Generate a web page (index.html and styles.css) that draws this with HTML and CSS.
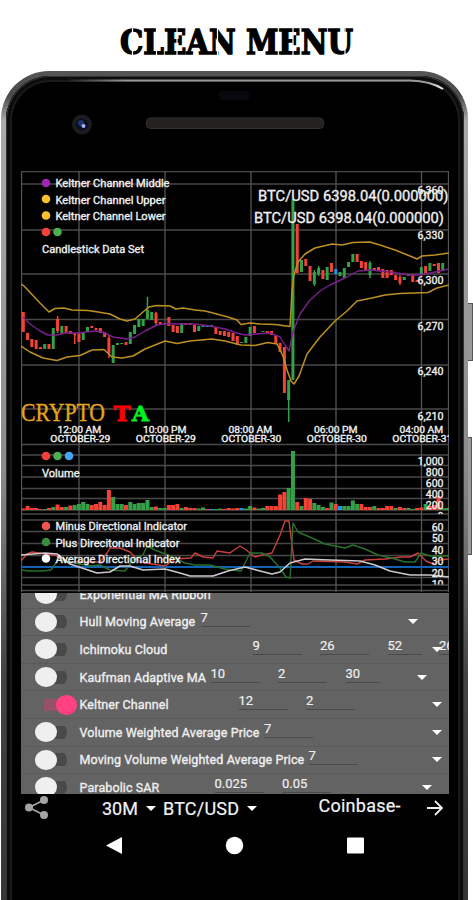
FILE: index.html
```html
<!DOCTYPE html>
<html lang="en">
<head>
  <meta charset="UTF-8">
  <meta name="viewport" content="width=device-width, initial-scale=1.0">
  <title>Crypto TA - Clean Menu</title>
  <link rel="stylesheet" href="styles.css">
</head>
<body>
  <h1>
    <svg width="473" height="71" viewBox="0 0 473 71">
      <text class="title" x="120" y="54" textLength="233" lengthAdjust="spacingAndGlyphs">CLEAN MENU</text>
      <!-- stencil cuts -->
      <path class="cuts" d="M132.500 28v28M156.500 28v28M177 28v28M217.500 28v28M293 28v28M345 28v28"/>
    </svg>
  </h1>

  <div class="device">
    <div class="side-button power"></div>
    <div class="side-button volume"></div>
    <div class="phone">
      <div class="top-bezel">
        <svg width="466" height="100" viewBox="2 71 466 100">
          <defs>
            <linearGradient id="shine" x1="0" x2="1">
              <stop offset="0" stop-color="#222"/>
              <stop offset="0.15" stop-color="#999"/>
              <stop offset="0.95" stop-color="#999"/>
              <stop offset="1" stop-color="#eee"/>
            </linearGradient>
          </defs>
          <path d="M70 80.500H410Q430 81 443 89" fill="none" stroke="url(#shine)" stroke-width="1.800"/>
          <rect x="219" y="91" width="30" height="9" rx="3" fill="#08090f"/>
          <circle cx="82" cy="124.500" r="10" fill="#1c1c1f"/>
          <circle cx="82" cy="124.500" r="6" fill="#0a0d20"/>
          <circle cx="81" cy="123" r="3" fill="#26336d"/>
          <circle cx="83.500" cy="126" r="2" fill="#a5b4ff"/>
          <rect x="146.500" y="118" width="177" height="10.500" rx="4" fill="#23201f" stroke="#35312f"/>
        </svg>
      </div>

      <div class="screen">
        <svg id="chart" width="428" height="422" viewBox="21 171 428 422"></svg>

        <div class="menu">
          <div class="row">
            <span class="switch"></span><span class="name">Exponential MA Ribbon</span>
          </div>
          <div class="row hull">
            <span class="switch"></span><span class="name">Hull Moving Average</span>
            <span class="field">7</span>
            <span class="caret"></span>
          </div>
          <div class="row ichimoku">
            <span class="switch"></span><span class="name">Ichimoku Cloud</span>
            <span class="field">9</span><span class="field">26</span><span class="field short">52</span>
            <span class="caret"></span><span class="field last">26</span>
          </div>
          <div class="row kaufman">
            <span class="switch"></span><span class="name">Kaufman Adaptive MA</span>
            <span class="field">10</span><span class="field">2</span><span class="field short">30</span>
            <span class="caret"></span>
          </div>
          <div class="row keltner">
            <span class="switch on"></span><span class="name">Keltner Channel</span>
            <span class="field">12</span><span class="field">2</span>
            <span class="caret"></span>
          </div>
          <div class="row vwap">
            <span class="switch"></span><span class="name">Volume Weighted Average Price</span>
            <span class="field">7</span>
            <span class="caret"></span>
          </div>
          <div class="row mvwap">
            <span class="switch"></span><span class="name">Moving Volume Weighted Average Price</span>
            <span class="field">7</span>
            <span class="caret"></span>
          </div>
          <div class="row sar">
            <span class="switch"></span><span class="name">Parabolic SAR</span>
            <span class="field">0.025</span><span class="field">0.05</span>
            <span class="caret"></span>
          </div>
        </div>

        <div class="toolbar">
          <svg class="share" width="24" height="23" viewBox="0 0 24 23">
            <path d="M19 4L4 11.500L19 19" fill="none" stroke="#a3a3a3" stroke-width="1.800"/>
            <circle cx="19" cy="4" r="4"/><circle cx="4" cy="11.500" r="4"/><circle cx="19" cy="19" r="4"/>
          </svg>
          <span class="interval">30M</span><span class="caret"></span>
          <span class="pair">BTC/USD</span><span class="caret"></span>
          <span class="exchange">Coinbase-</span>
          <svg class="next" width="18" height="18" viewBox="0 0 18 18">
            <path d="M1 9H16M9 2L16 9L9 16" fill="none" stroke="#eee" stroke-width="1.800"/>
          </svg>
        </div>

        <div class="navbar">
          <svg width="428" height="20" viewBox="21 835 428 20" fill="#fff">
            <path d="M106 845.500L122 837V854Z"/>
            <circle cx="234.500" cy="845.500" r="8.700"/>
            <rect x="347" y="837.500" width="17" height="16" rx="1"/>
          </svg>
        </div>
      </div>
    </div>
  </div>

  <script src="chart.js"></script>
</body>
</html>
```
FILE: styles.css
```css
* {
  box-sizing: border-box;
}
body {
  margin: 0;
  width: 473px;
  height: 900px;
  overflow: hidden;
  background-color: #fff;
  font-family: Roboto, "Liberation Sans", sans-serif;
}
svg {
  display: block;
}
h1 {
  margin: 0;
  height: 71px;
}
.title {
  font-family: "DejaVu Serif", serif;
  font-weight: bold;
  font-size: 33px;
  stroke: #000;
  stroke-width: 1.4;
}
.cuts {
  stroke: #fff;
  stroke-width: 1.2;
}

/* phone body */
.device {
  position: relative;
  height: 829px;
  padding-left: 1px;
}
.phone {
  position: relative;
  width: 467px;
  height: 870px;
  padding: 0 0 0 1px;
  border-radius: 48px 48px 0 0;
  overflow: hidden;
  background: linear-gradient(#555, #4a4a4a 25px, #aaa 50px, #999 240px, #8a8a8a 400px, #444 600px, #333);
}
.phone::before {
  content: "";
  position: absolute;
  left: 5px;
  right: 4px;
  top: 5px;
  bottom: 0;
  border-radius: 44px 44px 0 0;
  background-color: #000;
  box-shadow: inset 0 0 0 1px #333, inset 0 0 0 4px #0c0c0c, inset 0 0 0 6px #1b1b1b;
}
.side-button {
  position: absolute;
  left: 466px;
  width: 7px;
  border: 1px solid #555;
  background-color: #999;
}
.power {
  top: 232px;
  height: 58px;
}
.volume {
  top: 366px;
  height: 118px;
  width: 6px;
}
.top-bezel {
  position: relative;
  height: 100px;
}
.screen {
  position: relative;
  width: 428px;
  margin-left: 19px;
  background-color: #000;
}

/* chart */
.grid {
  stroke: #484848;
  stroke-width: 1.3;
}
.vgrid {
  stroke: #555;
  stroke-width: 1.3;
}
.label {
  fill: #f0f0f0;
  stroke: #f0f0f0;
  stroke-width: 0.35;
}

/* indicator menu */
.menu {
  height: 201px;
  overflow: hidden;
  background-color: #636363;
  color: #eee;
  font-size: 12.5px;
}
.row {
  display: flex;
  align-items: center;
  height: 27.6px;
  padding-left: 14px;
  border-bottom: 1px solid #5a5a5a;
  white-space: nowrap;
}
.row:first-child {
  margin-top: -12px;
}
.switch {
  display: flex;
  align-items: center;
  flex: none;
  width: 32px;
  height: 20px;
  margin-right: 12.5px;
  border-radius: 10px;
  background: linear-gradient(#494949, #494949) 10px center / 22px 13px no-repeat;
}
.switch::before {
  content: "";
  width: 21.5px;
  height: 20px;
  border-radius: 50%;
  background-color: #efefef;
}
.switch.on {
  width: 42px;
  margin-right: 2.5px;
  justify-content: flex-end;
  background: linear-gradient(#98516b, #98516b) 9px center / 26px 12px no-repeat;
}
.switch.on::before {
  background-color: #ff4081;
}
.name {
  flex: none;
  letter-spacing: 0.1px;
  -webkit-text-stroke: 0.35px #eee;
}
.field {
  flex: none;
  width: 49px;
  height: 17px;
  margin: 0 18.5px 6px 0;
  line-height: 15px;
  font-size: 13px;
  border-bottom: 1px solid #4a4a4a;
  -webkit-text-stroke: 0.2px #eee;
}
.field.short {
  width: 34px;
}
.caret {
  flex: none;
  width: 0;
  margin-left: auto;
  border: 5.5px solid transparent;
  border-top: 5.5px solid #fff;
  border-bottom: 0;
}
.row .caret {
  margin-right: 7px;
}
.hull .name { width: 121px; }
.ichimoku .name { width: 173px; }
.kaufman .name { width: 131px; }
.keltner .name { width: 159px; }
.vwap .name { width: 184.5px; }
.mvwap .name { width: 229px; }
.sar .name { width: 135px; }
.row.hull .caret { margin-right: 31.5px; }
.row.kaufman .caret { margin-right: 22px; }
.row.sar .caret { margin-right: 17px; }
.row.ichimoku .caret {
  margin: 0 -3px 0 -8px;
}
.field.last {
  margin-right: 0;
}

/* bottom bars */
.toolbar {
  display: flex;
  align-items: center;
  height: 28px;
  padding: 0 4px;
  color: #f2f2f2;
  font-size: 18px;
  -webkit-text-stroke: 0.2px #f2f2f2;
}
.toolbar .caret {
  margin: 0;
}
.share {
  fill: #a3a3a3;
  margin: -2px 53px 0 0;
}
.interval {
  width: 44px;
}
.toolbar .pair {
  width: 83.5px;
  margin-left: 7px;
  letter-spacing: 0.2px;
}
.exchange {
  width: 107px;
  margin: -5px 0 0 62px;
  letter-spacing: 0.25px;
}
.next {
  flex: none;
}
.navbar {
  padding-top: 13px;
  height: 78px;
}
```
FILE: chart.js
```js
const svg = document.getElementById('chart');
const colors = { r: '#f44336', g: '#34a047', b: '#2196f3' };
const START = 23.3;
const STEP = 4.28;
let out = '';

function line(cls, x1, y1, x2, y2) {
  out += `<line class="${cls}" x1="${x1}" y1="${y1}" x2="${x2}" y2="${y2}"/>`;
}
function curve(points, color, width) {
  out += `<polyline points="${points}" fill="none" stroke="${color}" stroke-width="${width}" stroke-linejoin="round"/>`;
}
function text(str, x, y, size, len, anchor = 'start') {
  const fit = len ? `textLength="${len}" lengthAdjust="spacingAndGlyphs"` : '';
  out += `<text class="label" x="${x}" y="${y}" font-size="${size}" text-anchor="${anchor}" ${fit}>${str}</text>`;
}
function dot(x, y, color) {
  out += `<circle cx="${x}" cy="${y}" r="4.3" fill="${color}"/>`;
}

// grid
[171.5, 184, 230, 274, 319.5, 365, 409, 444.5, 455, 465.5, 477, 488.5, 498.5, 510,
  514, 520, 531.5, 543.5, 555.5, 577.5, 585, 590.5].forEach(y => line('grid', 21, y, 449, y));
[21.5, 79, 165, 251, 336, 421.5, 448.5].forEach(x => line('vgrid', x, 171, x, 592));

// candles: color, top, bottom
const candles = `r312,332 r333,340 r339,347 r340,349 r347,349 g344,349 r344,349 g328,349 r319,331 g326,333
r326,333 r331,334 r333,335 r333,342 g332,340 g327,332 r326,328 r328,330 r328,333 r332,337
r338,353 g345,363 g343,345 g343,344 r342,345 g332,344 g325,334 g319,327 g319,326 g310,319
g312,320 r313,323 r322,324 g323,324 r317,326 r325,332 r326,333 g323,333 r323,325 r323,325
r325,332 g326,331 g325,327 b325,327 g325,327 r327,334 r331,335 r331,336 r332,337 r333,341
r336,345 g342,343 g337,343 g327,336 r326,333 r333,334 g331,332 r331,333 r331,335 r335,344
r343,352 r347,393 g380,400 g199,380 r224,273 g260,272 r259,266 r266,281 g272,284 g268,274
r270,279 g267,280 r263,272 b269,274 g272,276 g268,278 g262,267 g254,262 r254,262 r261,268
r262,271 g263,275 r268,271 r267,271 r269,278 r270,278 r270,275 r275,280 r277,283 g277,280
g274,276 r274,282 r280,282 g267,275 r266,274 g263,271 r264,266 r263,273 g263,271`.split(/\s+/);
candles.forEach((c, i) => {
  const [top, bottom] = c.slice(1).split(',').map(Number);
  const x = START + i * STEP;
  out += `<rect x="${x - 1.5}" y="${top}" width="3" height="${bottom - top}" fill="${colors[c[0]]}"/>`;
});
// wicks: index, color, top, bottom
[[8, 'r', 316, 333], [12, 'r', 333, 344], [29, 'g', 297, 312], [31, 'r', 312, 325], [62, 'g', 398, 422], [20, 'r', 335, 358],
  [68, 'g', 270, 286], [88, 'r', 275, 285], [81, 'g', 261, 278], [69, 'g', 266, 276]].forEach(([i, c, top, bottom]) => {
  out += `<rect x="${START + i * STEP - 0.7}" y="${top}" width="1.5" height="${bottom - top}" fill="${colors[c]}"/>`;
});

// keltner channel
curve('21,284 24,286 40,303 49,312 55,308.5 64,308 72,310 88,310.5 98,312 110,314 120,319 127,321 135,319 143,312 149,307 157,305.5 170,306 176,309 183,308 195,310 205,311 213,313 228,317 237,320 241,324.5 250,323 260,324 275,324.5 290,326.5 291,310 292,290 294,275 298,262 305,254 315,248 332,244 342,245 353,242.5 370,242 380,245 395,250 410,256 417,259 422,256 435,255 449,253', '#bd9022', 1.5);
curve('23,317 30,324 40,331 48,335 57,335 65,333 78,333 95,331 103,332 113,337 127,339 135,337 145,331 157,325 168,323.5 180,324 195,324 210,326 225,329 237,333 245,335 256,334 270,333 280,337 285,345 289,351 293,332 300,314 310,300 320,291 330,285 345,278 358,271 370,270 390,272 410,275 418,275 430,273 440,271 449,269', '#7b1f8e', 1.4);
curve('21,346 30,352 43,358 57,360.5 67,357 80,355.5 92,350 104,349.5 112,357 122,358 133,356 145,349 165,341 177,343.5 190,341 212,339 225,341 241,345 255,345.5 268,342.5 277,344 283,356 287,370 291,381 294,384 299,376 307,354 320,337 335,321 347,311 357,301 372,298 385,295 400,293.5 428,292.5 437,288 449,285', '#bd9022', 1.5);

// volume: color, height
const volume = `r1.5 r4 r2 r2 r1 g1 r2 g3 r5.5 r3 g3 r4.5 g5 g6 g8 g6 r5 r6 r8 r5 r20 g13 g6 g6 r5 g8 g6 g7 g7 g10
g3 r3.5 g2 g2 r5 r5 r6 g2 r3 r2 r2 g1.5 g2.5 r1 b1 g1 g1.5 r1 r2 r1.5 r2 b2 g1.5 g4 r2.5 g1.5 g2 r4 r4 r4
r15.5 r18 g22 g59 r8 g4 r12 r11 g7 g5 g3 r2 g7.5 r6 b4 g4 g4 g9.5 g6 r6 r3 r3 g4 r2 r2 r4 r4 g2 r3 r2
g2 g1 r2 r2.5 g6 r4 r5 r14 g2 g2`.split(/\s+/);
volume.forEach((v, i) => {
  const h = Number(v.slice(1));
  out += `<rect x="${START + i * STEP - 2}" y="${510 - h}" width="4" height="${h}" fill="${colors[v[0]]}"/>`;
});

// directional movement
curve('21,567 449,567', '#1460b4', 2.2);
curve('21,561 27,554 32,552 45,554 55,555 65,562 100,562 107,553 110,548 120,548 130,552 140,562 152,564 165,566 175,559 191,558 195,553 203,557 213,558 217,551 230,553 234,550 240,546 245,549 255,557 262,555 272,553 280,535 285,521 289,521 292,545 294,560 302,564 308,564 313,561 345,562 357,564 365,560 385,559 402,557 410,557 418,553 426,561 433,564 440,560 449,559', '#c9403c', 1.4);
curve('21,570 30,571 42,571 51,570 58,560 70,562 90,566 100,565 110,570 125,571 133,560 143,555 147,546 155,550 170,556 185,563 195,565 210,565 225,569 241,571 250,553 262,553 270,557 280,568 286,577 290,578 291,560 293,523 298,532 312,538 325,544 345,548 353,545 365,549 378,555 395,559 405,562 415,562 421,553 430,556 449,556', '#27722b', 1.4);
curve('21,555 45,553 57,554 70,564 85,569 97,573 110,572 120,566 130,566 143,570 165,569 180,573 190,576 213,576 228,571 245,567 260,571 272,574 280,572 290,563 305,559 330,560 360,561 375,565 390,571 410,575 430,575 449,577', '#cfc8cf', 1.6);

// legends
dot(46, 183, '#9c27b0');
dot(46, 199, '#fbc02d');
dot(46, 215.5, '#fbc02d');
dot(46, 232, '#f44336');
dot(57.5, 232, '#4caf50');
text('Keltner Channel Middle', 55.5, 187, 11, 114);
text('Keltner Channel Upper', 55.5, 203.5, 11, 110);
text('Keltner Channel Lower', 55.5, 220, 11, 110);
text('Candlestick Data Set', 42, 252.5, 11, 102);
dot(46, 456, '#f44336');
dot(57.5, 456, '#4caf50');
dot(69, 456, '#42a5f5');
text('Volume', 42, 477, 11, 37.5);
dot(46, 526, '#ef5350');
dot(46, 542, '#388e3c');
dot(46, 558.5, '#fff');
text('Minus Directional Indicator', 55.5, 530, 11, 131.5);
text('Plus Direcitonal Indicator', 55.5, 546.5, 11, 124);
text('Average Directional Index', 55.5, 563, 11, 125);

text('BTC/USD 6398.04(0.000000)', 258, 200.5, 14.5, 190.5);
text('BTC/USD 6398.04(0.000000)', 254, 223, 14.5, 190);

// axis labels
['6,360', '6,330', '6,300', '6,270', '6,240', '6,210'].forEach((t, i) => text(t, 443.5, 194 + i * 45.2, 10.5, 26, 'end'));
['1,000', '800', '600', '400', '200'].forEach((t, i) => text(t, 443.5, 465 + i * 11, 10.5, 0, 'end'));
[60, 50, 40, 30, 20].forEach((t, i) => text(t, 443.5, 530.5 + i * 11.6, 10.5, 0, 'end'));
// lowest labels are cut by the panel edge
out += '<clipPath id="volClip"><rect x="400" y="505" width="49" height="9"/></clipPath>';
out += '<clipPath id="dmiClip"><rect x="400" y="570" width="49" height="14.5"/></clipPath>';
out += '<g clip-path="url(#volClip)">';
text('0', 443.5, 520, 10.5, 0, 'end');
out += '</g><g clip-path="url(#dmiClip)">';
text('10', 443.5, 588, 10.5, 0, 'end');
out += '</g>';

[['12:00 AM', 'OCTOBER-29'], ['10:00 PM', 'OCTOBER-29'], ['08:00 AM', 'OCTOBER-30'],
  ['06:00 PM', 'OCTOBER-30'], ['04:00 AM', 'OCTOBER-31']].forEach(([time, date], i) => {
  const x = 79.3 + i * 85.5;
  text(time, x, 432.5, 9.8, 43.5, 'middle');
  text(date, x + 1, 441.8, 9.3, 60, 'middle');
});

// logo
out += '<text x="21" y="420.5" font-family="Liberation Serif, serif" font-size="25" fill="#e3a41c" stroke="#e3a41c" stroke-width="0.4" textLength="84" lengthAdjust="spacingAndGlyphs">CRYPTO</text>';
out += '<g font-family="DejaVu Serif, serif" font-weight="bold" font-size="19.5" stroke-width="0.8">';
out += '<text x="113.500" y="420.500" fill="#f00" stroke="#f00" textLength="17" lengthAdjust="spacingAndGlyphs">T</text>';
out += '<text x="132" y="420.500" fill="#00f020" stroke="#00f020" textLength="17" lengthAdjust="spacingAndGlyphs">A</text></g>';

svg.innerHTML = out;
```
